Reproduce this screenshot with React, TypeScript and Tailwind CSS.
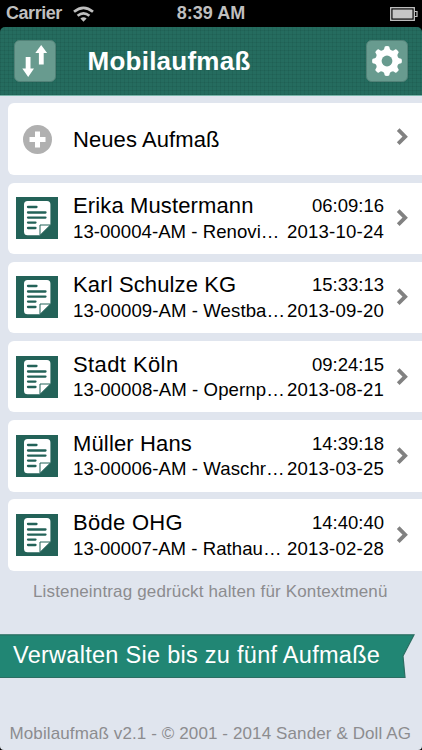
import React from "react";

type Entry = {
  name: string;
  nameStyle: string;
  detail: string;
  detailStyle: string;
  time: string;
  date: string;
};

const entries: Entry[] = [
  { name: "Erika Mustermann", nameStyle: "tracking-[0.13px]", detail: "13-00004-AM - Renovi…", detailStyle: "tracking-[0.04px]", time: "06:09:16", date: "2013-10-24" },
  { name: "Karl Schulze KG", nameStyle: "tracking-[0.13px]", detail: "13-00009-AM - Westba…", detailStyle: "tracking-[0.08px]", time: "15:33:13", date: "2013-09-20" },
  { name: "Stadt Köln", nameStyle: "tracking-[0.4px]", detail: "13-00008-AM - Opernp…", detailStyle: "tracking-[0.1px]", time: "09:24:15", date: "2013-08-21" },
  { name: "Müller Hans", nameStyle: "tracking-[0.15px]", detail: "13-00006-AM - Waschr…", detailStyle: "tracking-[0.08px]", time: "14:39:18", date: "2013-03-25" },
  { name: "Böde OHG", nameStyle: "tracking-[0.28px]", detail: "13-00007-AM - Rathau…", detailStyle: "tracking-[0.04px]", time: "14:40:40", date: "2013-02-28" },
];

function Chevron() {
  return (
    <svg className="mr-[13px] h-[18px] w-[13px] shrink-0" viewBox="0 0 13 18">
      <path d="M2.2 1.7 L9.2 8.700 L2.2 15.700" fill="none" stroke="#818181" strokeWidth="3.8" />
    </svg>
  );
}

function DocumentIcon() {
  return (
    <svg className="h-[42px] w-[42px] shrink-0" viewBox="0 0 42 42">
      <rect width="42" height="42" fill="#236258" />
      <path d="M11.500 4 H31 Q34.400 4 34.400 7.500 V27.800 L24 38.300 H11.500 Q8 38.300 8 34.800 V7.500 Q8 4 11.500 4Z" fill="#fff" />
      <path d="M24 38.300 V28 H34.400 Z" fill="#fff" stroke="#236258" strokeWidth="1" />
      <path d="M12 10 H20.500 M12 15.500 H29.500 M12 20.600 H29.500 M12 25.600 H19.500 M12 31 H19.500" stroke="#236258" strokeWidth="2.300" strokeLinecap="round" />
    </svg>
  );
}

function StatusBar() {
  return (
    <div className="grid h-[27px] shrink-0 grid-cols-3 items-center bg-black text-[18px] leading-[27px] font-bold text-[#bfbfbf]">
      <div className="flex items-center gap-[11px] pl-[6px]">
        <span className="tracking-[-0.45px]">Carrier</span>
        <svg width="21" height="16" viewBox="0 0 21 16" fill="none" stroke="#bfbfbf" strokeWidth="2.7">
          <path d="M1 5.800 Q10.500 -2.200 20 5.800" />
          <path d="M4.600 9.800 Q10.500 4.800 16.400 9.800" />
          <path d="M10.500 15.800 L7.400 12.600 Q10.500 9.900 13.600 12.600Z" fill="#bfbfbf" stroke="none" />
        </svg>
      </div>
      <span className="text-center tracking-[0.05px]">8:39 AM</span>
      <svg className="mr-[4px] justify-self-end" width="28" height="14" viewBox="0 0 28 14">
        <rect x="0.700" y="0.700" width="23.600" height="12.600" fill="none" stroke="#c6c6c6" strokeWidth="1.300" />
        <rect x="2.500" y="2.500" width="20" height="9" fill="#c6c6c6" />
        <path d="M24.500 4.500 H27 V9.500 H24.500" fill="none" stroke="#c6c6c6" strokeWidth="1.200" />
      </svg>
    </div>
  );
}

function Header() {
  return (
    <div className="shrink-0 bg-black">
      <header className="flex h-[69px] items-center rounded-t-[5px] border-b border-[#78b5a9] bg-[#256c5f] bg-[repeating-linear-gradient(0deg,rgba(0,25,20,0.08)_0px_1px,transparent_1px_4px),repeating-linear-gradient(90deg,rgba(0,25,20,0.08)_0px_1px,transparent_1px_4px)] px-[14px]">
        <svg className="h-[42px] w-[42px] shrink-0" viewBox="0 0 42 42">
          <rect x="0.500" y="0.500" width="41" height="41" rx="5" fill="#689b8f" stroke="#528278" />
          <path d="M11.700 17 H16.500 V28.500 H20 L14.200 37 L8.300 28.500 H11.700Z" fill="#fff" />
          <path d="M24.900 24.500 V13 H21.300 L27.200 5 L33.100 13 H29.700 V24.500Z" fill="#fff" />
        </svg>
        <h1 className="ml-[31.5px] flex-1 text-[26px] leading-[40px] font-bold tracking-[0.25px] whitespace-nowrap text-white">Mobilaufmaß</h1>
        <svg className="h-[42px] w-[42px] shrink-0" viewBox="0 0 42 42">
          <rect x="0.500" y="0.500" width="41" height="41" rx="5" fill="#689b8f" stroke="#528278" />
          <g transform="translate(21 21)" fill="#fff">
            <circle r="11.500" />
            {[0, 45, 90, 135, 180, 225, 270, 315].map((angle) => (
              <path key={angle} d="M-4.300 -10 L-2.800 -12.200 L-2.300 -14.200 Q-2 -14.900 0 -14.900 Q2 -14.900 2.300 -14.200 L2.800 -12.200 L4.300 -10Z" transform={`rotate(${angle})`} />
            ))}
            <circle r="5.400" fill="#689b8f" />
          </g>
        </svg>
      </header>
    </div>
  );
}

function EntryRow({ entry }: { entry: Entry }) {
  return (
    <li className="flex h-[71.4px] shrink-0 items-center rounded-l-[6px] bg-white pl-[8px]">
      <DocumentIcon />
      <div className="ml-[15px] flex w-[311px] flex-col">
        <div className="flex h-[27px] items-center justify-between">
          <span className={`text-[22px] leading-[27px] whitespace-nowrap ${entry.nameStyle}`}>{entry.name}</span>
          <span className="text-[18.5px] leading-[27px]">{entry.time}</span>
        </div>
        <div className="flex h-[25px] items-center justify-between">
          <span className={`text-[18.6px] leading-[24px] whitespace-nowrap ${entry.detailStyle}`}>{entry.detail}</span>
          <span className="text-[18.6px] leading-[24px] tracking-[0.2px] whitespace-nowrap">{entry.date}</span>
        </div>
      </div>
      <div className="flex flex-1 justify-end">
        <Chevron />
      </div>
    </li>
  );
}

export default function App() {
  return (
    <div className="bg-black">
      <main className="flex h-[750px] w-[422px] flex-col overflow-hidden rounded-b-[4px] bg-[#e0e5ee] font-['Liberation_Sans',Arial,sans-serif] text-black">
        <StatusBar />
        <Header />
        <ul className="mt-[7.400px] ml-[8px] flex shrink-0 flex-col gap-[7.800px]">
          <li className="flex h-[71.4px] shrink-0 items-center rounded-l-[6px] bg-white pl-[15px]">
            <svg className="mt-px h-[29px] w-[29px] shrink-0" viewBox="0 0 29 29">
              <circle cx="14.500" cy="14.500" r="14.500" fill="#b0b0b0" />
              <path d="M14.500 6.500 V22.500 M6.500 14.500 H22.500" stroke="#fff" strokeWidth="5" />
            </svg>
            <span className="ml-[21px] flex-1 text-[22px] tracking-[0.08px] whitespace-nowrap">Neues Aufmaß</span>
            <div className="mb-[5px]"><Chevron /></div>
          </li>
          {entries.map((entry) => (
            <EntryRow key={entry.detail} entry={entry} />
          ))}
        </ul>
        <p className="mt-[9px] pl-[33px] text-[17px] leading-[24px] tracking-[0.15px] whitespace-nowrap text-[#8c8c8f]">Listeneintrag gedrückt halten für Kontextmenü</p>
        <div className="mt-[30px] grid h-[45px] shrink-0">
          <svg className="col-start-1 row-start-1" width="422" height="45" viewBox="0 0 422 45">
            <path d="M-2 0.800 H414 L403 22 L405 43.500 H-2Z" fill="#218674" stroke="#2b6e62" strokeWidth="1.200" />
          </svg>
          <span className="z-10 col-start-1 row-start-1 pl-[13px] text-[23.5px] leading-[43px] tracking-[0.28px] whitespace-nowrap text-white">Verwalten Sie bis zu fünf Aufmaße</span>
        </div>
        <footer className="mt-auto mb-[4px] pl-[9.5px] text-[17px] leading-[24px] tracking-[0.11px] whitespace-nowrap text-[#8c8c8f]">Mobilaufmaß v2.1 - © 2001 - 2014 Sander &amp; Doll AG</footer>
      </main>
    </div>
  );
}
